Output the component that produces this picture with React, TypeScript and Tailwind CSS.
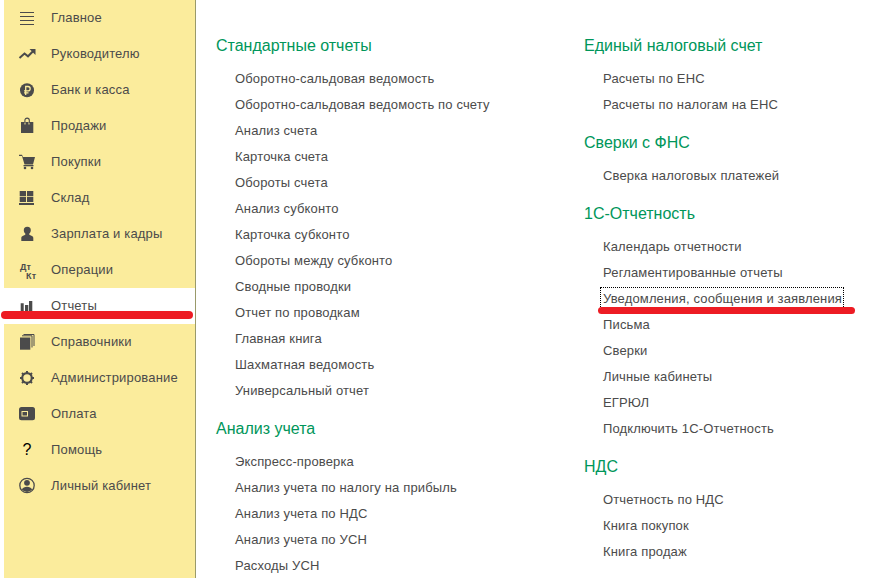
import React from 'react';

const ink = '#4b4b4b';
const sidebarBg = '#fbec9c';

const icons: Record<string, React.ReactNode> = {
  menu: (
    <path d="M4 6.500h14M4 10.500h14M4 14.500h14M4 18.500h14" stroke={ink} strokeWidth="1" />
  ),
  trend: (
    <>
      <path d="M3.500 16l5-4.500 3.500 2.800 5-5" stroke={ink} strokeWidth="2" fill="none" />
      <path d="M13.500 7h6v6z" fill={ink} />
    </>
  ),
  ruble: (
    <>
      <circle cx="11" cy="12.300" r="7" fill={ink} />
      <path d="M9.700 17V8.500h2.300a2.100 2.100 0 010 4.300H8M8 14.800h4.500" stroke={sidebarBg} strokeWidth="1.300" fill="none" />
    </>
  ),
  bag: (
    <>
      <path d="M5 8h3.500v2.500h1V8h3v2.500h1V8H17.300v11H5z" fill={ink} />
      <path d="M8.900 9V6.300a2.200 2.200 0 014.400 0V9" stroke={ink} strokeWidth="1.100" fill="none" />
    </>
  ),
  cart: (
    <>
      <path d="M3 4.700h3l1 2.300H19l-2 7.500H8.500L6 6H3z" fill={ink} />
      <path d="M7.500 15h10v1.300H7.500z" fill={ink} />
      <circle cx="9" cy="18" r="1.300" fill={ink} />
      <circle cx="16" cy="18" r="1.300" fill={ink} />
    </>
  ),
  stock: (
    <path d="M3.700 5H10v5.300H3.700zM11 5h6.300v5.300H11zM3.700 11H10v5H3.700zM11 11h6.300v5H11zM3 17h15v2H3z" fill={ink} />
  ),
  person: (
    <path d="M11.300 4.700a3.500 3.500 0 013.500 3.600c0 1.300-.7 2.600-1.500 3.300v1.200l2.700 1.200c1 .5 1.300 1.100 1.300 2V19h-12v-3c0-.9.400-1.500 1.300-2l2.700-1.200v-1.200c-.8-.7-1.500-2-1.500-3.300a3.500 3.500 0 013.500-3.600z" fill={ink} />
  ),
  chart: (
    <path d="M4.700 9.300h3V19h-3zM9 11h3.300v8H9zM13 7h3.300v12H13z" fill={ink} />
  ),
  books: (
    <>
      <path d="M4 7.500h10.300v12.200H4z" fill={ink} />
      <path d="M6 5.800h10V17.500M7.500 4.500H18V16" stroke={ink} strokeWidth="1" fill="none" />
    </>
  ),
  gear: (
    <>
      <circle cx="11" cy="12" r="4.800" stroke={ink} strokeWidth="2.200" fill="none" />
      <path d="M11 5v3M11 16v3M4 12h3M15 12h3M6 7l2 2M14 15l2 2M16 7l-2 2M8 15l-2 2" stroke={ink} strokeWidth="2" />
    </>
  ),
  wallet: (
    <>
      <rect x="3" y="5" width="16" height="13.300" rx="2.500" fill={ink} />
      <rect x="6" y="9.500" width="5.500" height="4.500" stroke={sidebarBg} strokeWidth="1" fill="none" />
    </>
  ),
  account: (
    <>
      <circle cx="11" cy="11.500" r="7.200" stroke={ink} strokeWidth="1.300" fill="none" />
      <circle cx="11" cy="8.800" r="2.900" fill={ink} />
      <path d="M5.800 15.500c1.200-2 2.800-2.800 5.200-2.800s4 .8 5.200 2.800a6.800 6.800 0 01-10.400 0z" fill={ink} />
    </>
  ),
};

function NavIcon({ name }: { name: string }) {
  if (name === 'question') {
    return <span className="flex h-6 w-[22px] mr-[2px] items-center justify-center text-base text-black">?</span>;
  }
  if (name === 'dtkt') {
    return (
      <span className="relative block h-6 w-6 font-bold text-[#4b4b4b]">
        <span className="absolute left-[4px] top-[4px] text-[9px] leading-[10px]">Дт</span>
        <span className="absolute left-[10px] top-[13px] text-[9px] leading-[10px]">Кт</span>
      </span>
    );
  }
  return (
    <svg width="24" height="24" viewBox="0 0 24 24" className="block">
      {icons[name]}
    </svg>
  );
}

const navItems = [
  ['menu', 'Главное'],
  ['trend', 'Руководителю'],
  ['ruble', 'Банк и касса'],
  ['bag', 'Продажи'],
  ['cart', 'Покупки'],
  ['stock', 'Склад'],
  ['person', 'Зарплата и кадры'],
  ['dtkt', 'Операции'],
  ['chart', 'Отчеты'],
  ['books', 'Справочники'],
  ['gear', 'Администрирование'],
  ['wallet', 'Оплата'],
  ['question', 'Помощь'],
  ['account', 'Личный кабинет'],
];

const leftGroups = [
  {
    title: 'Стандартные отчеты',
    links: [
      'Оборотно-сальдовая ведомость',
      'Оборотно-сальдовая ведомость по счету',
      'Анализ счета',
      'Карточка счета',
      'Обороты счета',
      'Анализ субконто',
      'Карточка субконто',
      'Обороты между субконто',
      'Сводные проводки',
      'Отчет по проводкам',
      'Главная книга',
      'Шахматная ведомость',
      'Универсальный отчет',
    ],
  },
  {
    title: 'Анализ учета',
    links: [
      'Экспресс-проверка',
      'Анализ учета по налогу на прибыль',
      'Анализ учета по НДС',
      'Анализ учета по УСН',
      'Расходы УСН',
    ],
  },
];

const rightGroups = [
  { title: 'Единый налоговый счет', links: ['Расчеты по ЕНС', 'Расчеты по налогам на ЕНС'] },
  { title: 'Сверки с ФНС', links: ['Сверка налоговых платежей'] },
  {
    title: '1С-Отчетность',
    links: [
      'Календарь отчетности',
      'Регламентированные отчеты',
      'Уведомления, сообщения и заявления',
      'Письма',
      'Сверки',
      'Личные кабинеты',
      'ЕГРЮЛ',
      'Подключить 1С-Отчетность',
    ],
  },
  { title: 'НДС', links: ['Отчетность по НДС', 'Книга покупок', 'Книга продаж'] },
];

function Group({ title, links }: { title: string; links: string[] }) {
  return (
    <div className="mb-3">
      <div className="flex h-[26px] items-center text-base text-[#00965a]">{title}</div>
      <div className="mt-[7px]">
        {links.map((link) => (
          <div
            key={link}
            className="flex h-[26px] items-center pl-[19px] text-[13px] tracking-[0.15px] text-[#4b4b4b]"
          >
            <span
              className={
                link === 'Уведомления, сообщения и заявления'
                  ? '-ml-[2px] py-px pl-[2px] pr-[1px] outline-1 outline-offset-0 outline-dotted outline-black'
                  : ''
              }
            >
              {link}
            </span>
          </div>
        ))}
      </div>
    </div>
  );
}

export default function App() {
  return (
    <div className="relative flex h-[578px] w-[873px] overflow-hidden bg-white font-['Liberation_Sans',Arial,sans-serif]">
      <aside className="ml-1 h-full w-[192px] shrink-0 border-r border-[#9a9a6a] bg-[#fbec9c]">
        {navItems.map(([icon, label]) => (
          <div
            key={label}
            className={`flex h-9 items-center pl-3 text-[13px] tracking-[0.17px] text-[#4b4b4b] ${label === 'Отчеты' ? 'bg-white' : ''}`}
          >
            <NavIcon name={icon} />
            <span className="ml-[11px]">{label}</span>
          </div>
        ))}
      </aside>

      <main className="flex flex-1 pl-5 pt-[33px]">
        <div className="w-[368px] shrink-0">
          {leftGroups.map((group) => (
            <Group key={group.title} {...group} />
          ))}
        </div>
        <div className="flex-1">
          {rightGroups.map((group) => (
            <Group key={group.title} {...group} />
          ))}
        </div>
      </main>

      {/* red marker strokes drawn over the page */}
      <div className="absolute left-[1px] top-[311px] h-2 w-[192px] rounded-full bg-[#ed1c24]" />
      <div className="absolute left-[598px] top-[307px] h-[7px] w-[257px] rounded-full bg-[#ed1c24]" />
    </div>
  );
}
